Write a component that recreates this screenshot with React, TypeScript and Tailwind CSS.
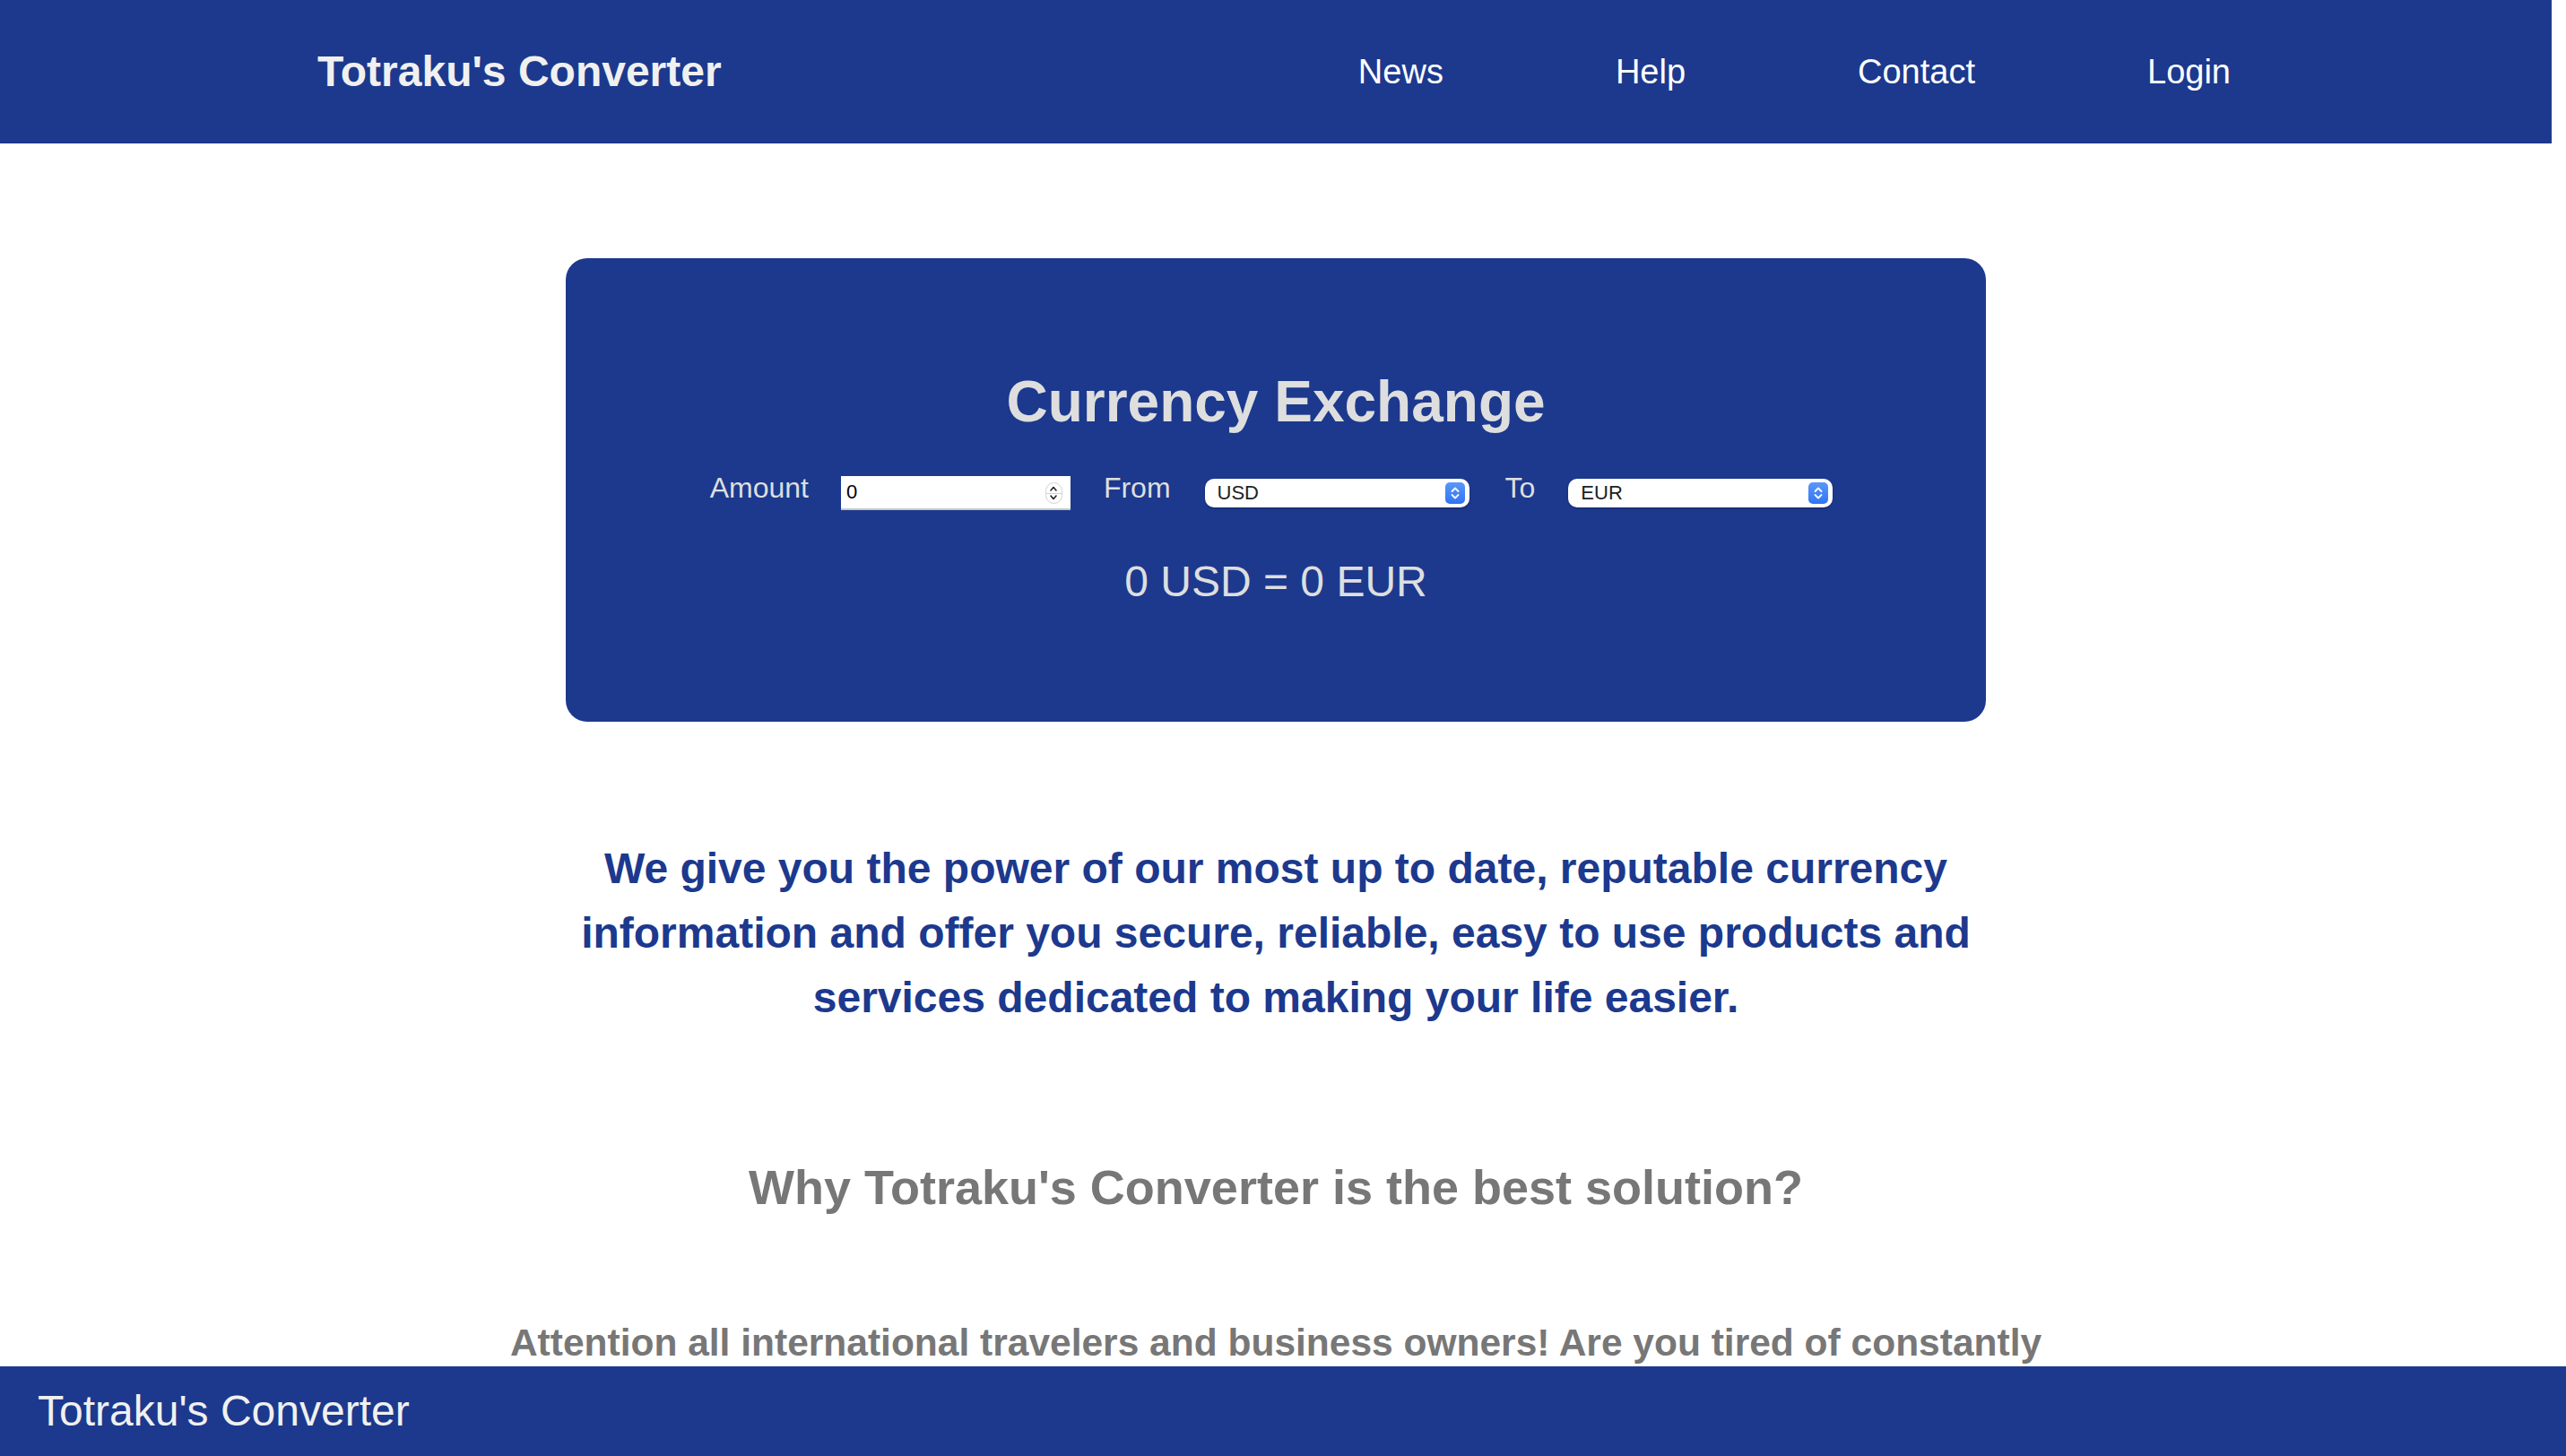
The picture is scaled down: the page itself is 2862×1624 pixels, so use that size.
import React from "react";

function SelectBox({ value, options }: { value: string; options: string[] }) {
  return (
    <div className="relative w-[295px] h-[32px] rounded-[10px] bg-white shadow-[0_1px_2px_rgba(0,0,0,0.35)]">
      <select
        defaultValue={value}
        className="appearance-none w-full h-full bg-transparent rounded-[10px] pl-[14px] pr-[36px] text-[22px] leading-none text-[#222] outline-none font-['Liberation_Sans',Arial,sans-serif]"
      >
        {options.map((o) => (
          <option key={o} value={o}>
            {o}
          </option>
        ))}
      </select>
      <div className="pointer-events-none absolute right-[5px] top-[4px] w-[22px] h-[24px] rounded-[5px] bg-gradient-to-b from-[#5a97f8] to-[#2f74f5] flex items-center justify-center">
        <svg width="12" height="16" viewBox="0 0 12 16" fill="none">
          <path d="M2.5 6 L6 2.5 L9.5 6" stroke="white" strokeWidth="1.8" strokeLinecap="round" strokeLinejoin="round" />
          <path d="M2.5 10 L6 13.5 L9.5 10" stroke="white" strokeWidth="1.8" strokeLinecap="round" strokeLinejoin="round" />
        </svg>
      </div>
    </div>
  );
}

function NumberBox() {
  return (
    <div className="relative w-[256px] h-[38px] bg-white border-b-2 border-[#c8c8c8]">
      <input
        type="text"
        defaultValue="0"
        className="w-full h-full bg-transparent pl-[6px] pr-[34px] text-[22px] leading-none text-black outline-none font-['Liberation_Sans',Arial,sans-serif]"
      />
      <div className="pointer-events-none absolute right-[9px] top-[7px] w-[19px] h-[24px] rounded-full border border-[#d4d4d4] bg-white flex flex-col items-center justify-between py-[2px]">
        <svg width="10" height="8" viewBox="0 0 10 8" fill="none">
          <path d="M2 6 L5 2.5 L8 6" stroke="#222" strokeWidth="1.6" strokeLinecap="round" strokeLinejoin="round" />
        </svg>
        <div className="w-full h-px bg-[#d4d4d4]" />
        <svg width="10" height="8" viewBox="0 0 10 8" fill="none">
          <path d="M2 2 L5 5.5 L8 2" stroke="#222" strokeWidth="1.6" strokeLinecap="round" strokeLinejoin="round" />
        </svg>
      </div>
    </div>
  );
}

export default function App() {
  return (
    <div className="w-[2846px] min-h-screen bg-white font-['Liberation_Sans',Arial,Helvetica,sans-serif]">
      <header className="h-[160px] bg-blue-900 flex items-center justify-between pl-[354px] pr-[358px]">
        <div className="text-[48px] font-bold text-[#f0f0f0] leading-none">Totraku's Converter</div>
        <nav className="flex items-center gap-[192px] text-[38px] text-white leading-none">
          <a href="#">News</a>
          <a href="#">Help</a>
          <a href="#">Contact</a>
          <a href="#">Login</a>
        </nav>
      </header>

      <main className="pt-[128px] flex flex-col items-center pb-[200px]">
        <section className="w-[1584px] h-[517px] rounded-[24px] bg-blue-900 pt-[128px] flex flex-col items-center">
          <h1 className="text-[64px] leading-none font-bold text-[#dedede]">Currency Exchange</h1>
          <div className="mt-[51px] mr-[10px] h-[38px] flex items-center">
            <label className="text-[32px] leading-none text-[#dedede] mr-[36px] mb-[12px]">Amount</label>
            <div className="mr-[37px]">
              <NumberBox />
            </div>
            <label className="text-[32px] leading-none text-[#dedede] mr-[38px] mb-[12px]">From</label>
            <div className="mr-[40px]">
              <SelectBox value="USD" options={["USD", "EUR", "GBP", "JPY"]} />
            </div>
            <label className="text-[32px] leading-none text-[#dedede] mr-[37px] mb-[12px]">To</label>
            <SelectBox value="EUR" options={["EUR", "USD", "GBP", "JPY"]} />
          </div>
          <div className="mt-[56px] text-[48px] leading-none text-[#dedede]">0 USD = 0 EUR</div>
        </section>

        <p className="mt-[128px] w-[1584px] text-center text-[48px] leading-[72px] font-bold text-blue-900">
          We give you the power of our most up to date, reputable currency information and offer you secure,
          reliable, easy to use products and services dedicated to making your life easier.
        </p>

        <h2 className="mt-[148px] text-[54px] leading-none font-bold text-[#777777]">
          Why Totraku's Converter is the best solution?
        </h2>

        <p className="mt-[115px] w-[1820px] text-center text-[42.5px] leading-[63px] font-bold text-[#777777]">
          Attention all international travelers and business owners! Are you tired of constantly checking
          exchange rates and doing complicated calculations every time you need to convert money? Totraku's
          Converter gives you accurate, real-time rates in seconds.
        </p>
      </main>

      <footer className="fixed bottom-0 left-0 right-0 h-[100px] bg-blue-900 flex items-center pl-[42px]">
        <span className="text-[48px] leading-none text-[#f0f0f0]">Totraku's Converter</span>
      </footer>
    </div>
  );
}
